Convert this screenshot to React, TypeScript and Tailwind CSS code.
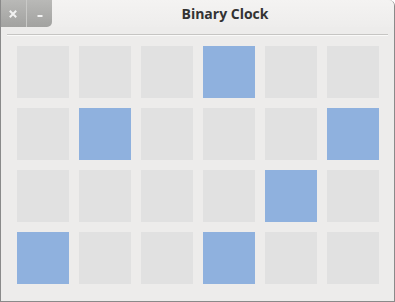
import React from 'react';

const lit: number[][] = [
  [0, 0, 0, 1, 0, 0],
  [0, 1, 0, 0, 0, 1],
  [0, 0, 0, 0, 1, 0],
  [1, 0, 0, 1, 0, 0],
];

const App: React.FC = () => {
  return (
    <div className="w-[395px] h-[302px] bg-[#edeceb] border-l border-r border-b border-[#8a8a8a] rounded-tr-[6px] overflow-hidden flex flex-col" style={{ fontFamily: '"Open Sans", "DejaVu Sans", sans-serif' }}>
      {/* Title bar */}
      <div className="h-[27px] flex items-stretch bg-gradient-to-b from-[#f4f3f2] to-[#eeedec]">
        <div className="flex items-stretch rounded-br-[5px] overflow-hidden bg-gradient-to-b from-[#b9b9b7] to-[#a2a2a0] -ml-px">
          <button className="w-[27px] flex items-center justify-center border-r border-[#c9c9c7]">
            <svg width="8" height="8" viewBox="0 0 8 8">
              <path d="M1.5 1.5 L6.5 6.5 M6.5 1.5 L1.5 6.5" stroke="#f2f2f2" strokeWidth="2" strokeLinecap="square" />
            </svg>
          </button>
          <button className="w-[25px] flex items-center justify-center">
            <svg width="8" height="9" viewBox="0 0 8 9">
              <rect x="1.5" y="6" width="5" height="2" fill="#f2f2f2" />
            </svg>
          </button>
        </div>
        <div className="flex-1 flex items-center justify-center pl-[4px]">
          <span className="text-[14px] font-bold text-[#333333]">Binary Clock</span>
        </div>
      </div>
      {/* Content */}
      <div className="px-[6px] pt-[7px]">
        <div className="h-px bg-[#c6c5c3] border-b border-[#fafaf9] box-content" />
        <div className="pt-[10px] pl-[10px] grid grid-cols-[repeat(6,52px)] gap-[10px]">
          {lit.flat().map((on, i) => (
            <div key={i} className={`w-[52px] h-[52px] ${on ? 'bg-[#8fb1de]' : 'bg-[#e1e1e1]'}`} />
          ))}
        </div>
      </div>
    </div>
  );
};

export default App;
